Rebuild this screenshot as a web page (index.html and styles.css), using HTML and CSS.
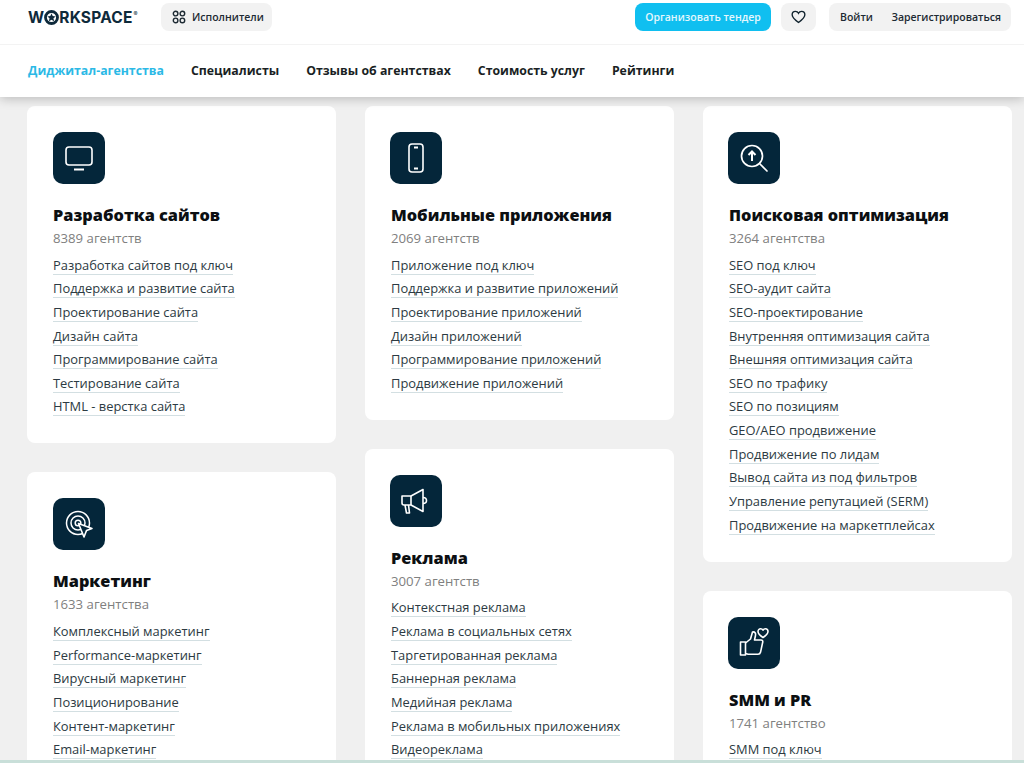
FILE: index.html
```html
<!DOCTYPE html>
<html lang="ru">
  <head>
    <meta charset="UTF-8" />
    <meta name="viewport" content="width=device-width, initial-scale=1.0" />
    <title>Workspace</title>
    <link rel="stylesheet" href="styles.css">
  </head>
  <body>
    <header class="header">
      <div class="topbar">
        <a class="logo">W<svg class="logo-o" viewBox="0 0 16 16"><circle cx="8" cy="8" r="6.4" fill="none" stroke="#0e2a3b" stroke-width="3"/><path d="M8 3.6l1.3 2.9 3.1.3-2.3 2.1.7 3.1L8 10.5l-2.8 1.5.7-3.1-2.3-2.1 3.1-.3z" fill="#0e2a3b"/></svg>RKSPACE<sup>®</sup></a>
        <a class="btn-gray btn-perf">
          <svg class="perf-icon" viewBox="0 0 14 14" fill="none" stroke="#1d2a33" stroke-width="1.4"><circle cx="3.6" cy="3.6" r="2.3"/><circle cx="10.4" cy="3.6" r="2.3"/><circle cx="3.6" cy="10.4" r="2.3"/><circle cx="10.4" cy="10.4" r="2.3"/></svg>
          Исполнители
        </a>
        <div class="topbar-right">
          <a class="btn-blue">Организовать тендер</a>
          <a class="btn-gray btn-heart">
            <svg viewBox="0 0 16 15" width="15" height="14" fill="none" stroke="#12242f" stroke-width="1.5"><path d="M8 13.4C3.6 10.2 1.2 8 1.2 5.1 1.2 3 2.8 1.5 4.7 1.5 6 1.5 7.3 2.2 8 3.5 8.7 2.2 10 1.5 11.3 1.5c1.900 0 3.500 1.500 3.500 3.600 0 2.900-2.400 5.100-6.800 8.300z"/></svg>
          </a>
          <div class="btn-gray btn-auth">
            <a>Войти</a>
            <a>Зарегистрироваться</a>
          </div>
        </div>
      </div>
      <nav class="nav">
        <a class="active">Диджитал-агентства</a>
        <a>Специалисты</a>
        <a>Отзывы об агентствах</a>
        <a>Стоимость услуг</a>
        <a>Рейтинги</a>
      </nav>
    </header>

    <main class="columns">
      <div class="col">
        <section class="card">
          <div class="card-icon">
            <svg viewBox="0 0 32 32" fill="none" stroke="#fff" stroke-width="1.6"><rect x="3" y="5" width="26" height="18" rx="3"/><path d="M11 27.500h10" stroke-width="2"/></svg>
          </div>
          <h2>Разработка сайтов</h2>
          <p class="count">8389 агентств</p>
          <ul>
            <li><a>Разработка сайтов под ключ</a></li>
            <li><a>Поддержка и развитие сайта</a></li>
            <li><a>Проектирование сайта</a></li>
            <li><a>Дизайн сайта</a></li>
            <li><a>Программирование сайта</a></li>
            <li><a>Тестирование сайта</a></li>
            <li><a>HTML - верстка сайта</a></li>
          </ul>
        </section>
        <section class="card">
          <div class="card-icon">
            <svg viewBox="0 0 32 32" fill="none" stroke="#fff" stroke-width="1.6"><circle cx="15" cy="15" r="11.500" stroke-width="1.500"/><circle cx="15" cy="15" r="7" stroke-width="1.500"/><circle cx="15" cy="15" r="2.800" stroke-width="1.500"/><path d="M15.500 15.500l13.500 5-5.500 2-2.500 6.500z" fill="#04263a" stroke-linejoin="round"/></svg>
          </div>
          <h2>Маркетинг</h2>
          <p class="count">1633 агентства</p>
          <ul>
            <li><a>Комплексный маркетинг</a></li>
            <li><a>Performance-маркетинг</a></li>
            <li><a>Вирусный маркетинг</a></li>
            <li><a>Позиционирование</a></li>
            <li><a>Контент-маркетинг</a></li>
            <li><a>Email-маркетинг</a></li>
          </ul>
        </section>
      </div>

      <div class="col">
        <section class="card">
          <div class="card-icon">
            <svg viewBox="0 0 32 32" fill="none" stroke="#fff" stroke-width="1.6"><rect x="9" y="2" width="14" height="28" rx="3"/><path d="M14 5.500h4M14 26.500h4" stroke-width="2"/></svg>
          </div>
          <h2>Мобильные приложения</h2>
          <p class="count">2069 агентств</p>
          <ul>
            <li><a>Приложение под ключ</a></li>
            <li><a>Поддержка и развитие приложений</a></li>
            <li><a>Проектирование приложений</a></li>
            <li><a>Дизайн приложений</a></li>
            <li><a>Программирование приложений</a></li>
            <li><a>Продвижение приложений</a></li>
          </ul>
        </section>
        <section class="card">
          <div class="card-icon">
            <svg viewBox="0 0 32 32" fill="none" stroke="#fff" stroke-width="1.6" stroke-linejoin="round"><path d="M2 11h9v9H4a2 2 0 0 1-2-2z"/><path d="M11 11l12-6.500v22L11 20"/><path d="M23 12.500c2.200 0 3.500 1.300 3.500 3s-1.300 3-3.500 3"/><path d="M5 20l1.500 8h3L8.500 20"/></svg>
          </div>
          <h2>Реклама</h2>
          <p class="count">3007 агентств</p>
          <ul>
            <li><a>Контекстная реклама</a></li>
            <li><a>Реклама в социальных сетях</a></li>
            <li><a>Таргетированная реклама</a></li>
            <li><a>Баннерная реклама</a></li>
            <li><a>Медийная реклама</a></li>
            <li><a>Реклама в мобильных приложениях</a></li>
            <li><a>Видеореклама</a></li>
          </ul>
        </section>
      </div>

      <div class="col">
        <section class="card">
          <div class="card-icon">
            <svg viewBox="0 0 32 32" fill="none" stroke="#fff" stroke-width="1.7"><circle cx="14" cy="14" r="10.500"/><path d="M21.500 21.500L29 29" stroke-linecap="round"/><path d="M14 19v-9M10.500 13L14 9.500l3.500 3.500" stroke-width="2"/></svg>
          </div>
          <h2>Поисковая оптимизация</h2>
          <p class="count">3264 агентства</p>
          <ul>
            <li><a>SEO под ключ</a></li>
            <li><a>SEO-аудит сайта</a></li>
            <li><a>SEO-проектирование</a></li>
            <li><a>Внутренняя оптимизация сайта</a></li>
            <li><a>Внешняя оптимизация сайта</a></li>
            <li><a>SEO по трафику</a></li>
            <li><a>SEO по позициям</a></li>
            <li><a>GEO/AEO продвижение</a></li>
            <li><a>Продвижение по лидам</a></li>
            <li><a>Вывод сайта из под фильтров</a></li>
            <li><a>Управление репутацией (SERM)</a></li>
            <li><a>Продвижение на маркетплейсах</a></li>
          </ul>
        </section>
        <section class="card">
          <div class="card-icon">
            <svg viewBox="0 0 32 32" fill="none" stroke="#fff" stroke-width="1.6" stroke-linejoin="round"><path d="M2.500 15h5v13h-5z"/><path d="M7.500 16l5-4 2-7c2.500-.5 3.500 1.500 3 3.500l-1 4.500h6.500c1.500 0 2 1 1.700 2.300l-2.200 10c-.3 1.200-1 2-2.500 2H11c-1.500 0-2-.8-3.500-.8"/><path d="M25 10.500c-2.500-1.700-5-3.500-5-6 0-1.700 1.300-2.700 2.600-2.700 1 0 1.900.5 2.400 1.400.5-.9 1.400-1.400 2.400-1.400 1.300 0 2.600 1 2.600 2.700 0 2.500-2.500 4.300-5 6z"/></svg>
          </div>
          <h2>SMM и PR</h2>
          <p class="count">1741 агентство</p>
          <ul>
            <li><a>SMM под ключ</a></li>
          </ul>
        </section>
      </div>
    </main>
    <div class="bottom-line"></div>
  </body>
</html>
```

FILE: styles.css
```css
* {
  margin: 0;
  padding: 0;
  box-sizing: border-box;
}
body {
  height: 763px;
  overflow: hidden;
  background-color: #f0f0f0;
  font-family: "Open Sans", "Noto Sans", sans-serif;
  color: #1d2a33;
}
ul {
  list-style: none;
}

.header {
  background: #fff;
  box-shadow: 0 2px 10px rgba(0, 0, 0, 0.22);
  position: relative;
}
.topbar {
  height: 45px;
  padding: 3px 13px 0 28px;
  display: flex;
  align-items: flex-start;
  border-bottom: 1px solid #f3f3f3;
}
.logo {
  display: flex;
  align-items: center;
  width: 133px;
  height: 28px;
  font-family: "Inter", sans-serif;
  font-weight: 700;
  font-size: 15.5px;
  letter-spacing: 0.2px;
  color: #0e2a3b;
}
.logo-o {
  width: 15px;
  height: 15px;
}
.logo sup {
  font-size: 6px;
  font-weight: 400;
  margin: -8px 0 0 1px;
}
.btn-gray {
  background: #f2f2f2;
  border-radius: 8px;
  height: 28px;
  display: flex;
  align-items: center;
  font-size: 10.5px;
  font-weight: 600;
}
.btn-perf {
  padding: 0 8px 0 11px;
  gap: 6px;
}
.perf-icon {
  width: 14px;
  height: 14px;
}
.topbar-right {
  margin-left: auto;
  display: flex;
  gap: 10px;
}
.btn-blue {
  background: #10bff0;
  color: #e4f7fd;
  border-radius: 8px;
  height: 28px;
  width: 136px;
  display: flex;
  align-items: center;
  justify-content: center;
  font-size: 10.5px;
  font-weight: 600;
}
.btn-heart {
  width: 35px;
  justify-content: center;
  margin-right: 3px;
}
.btn-auth {
  width: 182px;
  padding: 0 10px 0 11px;
  justify-content: space-between;
}

.nav {
  height: 52px;
  padding: 0 0 2px 28px;
  display: flex;
  align-items: center;
  gap: 27px;
  font-size: 12.3px;
  font-weight: 700;
  color: #1a1f24;
}
.nav .active {
  color: #2bb9e6;
}

.columns {
  display: grid;
  grid-template-columns: repeat(3, 309px);
  gap: 29px;
  padding: 9px 0 0 27px;
}
.col {
  display: flex;
  flex-direction: column;
  gap: 29px;
}
.card {
  background: #fff;
  border-radius: 8px;
  padding: 26px 26px 27px;
}
.card-icon {
  width: 52px;
  height: 52px;
  border-radius: 10px;
  background: #04263a;
  display: flex;
  align-items: center;
  justify-content: center;
  margin-bottom: 20px;
}
.col + .col .card-icon {
  margin-left: -1px;
}
.card-icon svg {
  width: 32px;
  height: 32px;
}
.card h2 {
  font-size: 16.3px;
  line-height: 22px;
  font-weight: 800;
  color: #0c0f12;
}
.count {
  font-size: 13.2px;
  line-height: 18px;
  margin-top: 3px;
  color: #808080;
}
.card ul {
  margin-top: 4px;
}
.card li {
  height: 23.65px;
  display: flex;
  align-items: flex-end;
}
.card li a {
  font-size: 12.9px;
  line-height: 18px;
  color: #2c3a42;
  border-bottom: 1px solid #d3dfe2;
}
.bottom-line {
  position: fixed;
  left: 0;
  right: 0;
  bottom: 0;
  height: 3px;
  background: #c9dfd9;
}
```
